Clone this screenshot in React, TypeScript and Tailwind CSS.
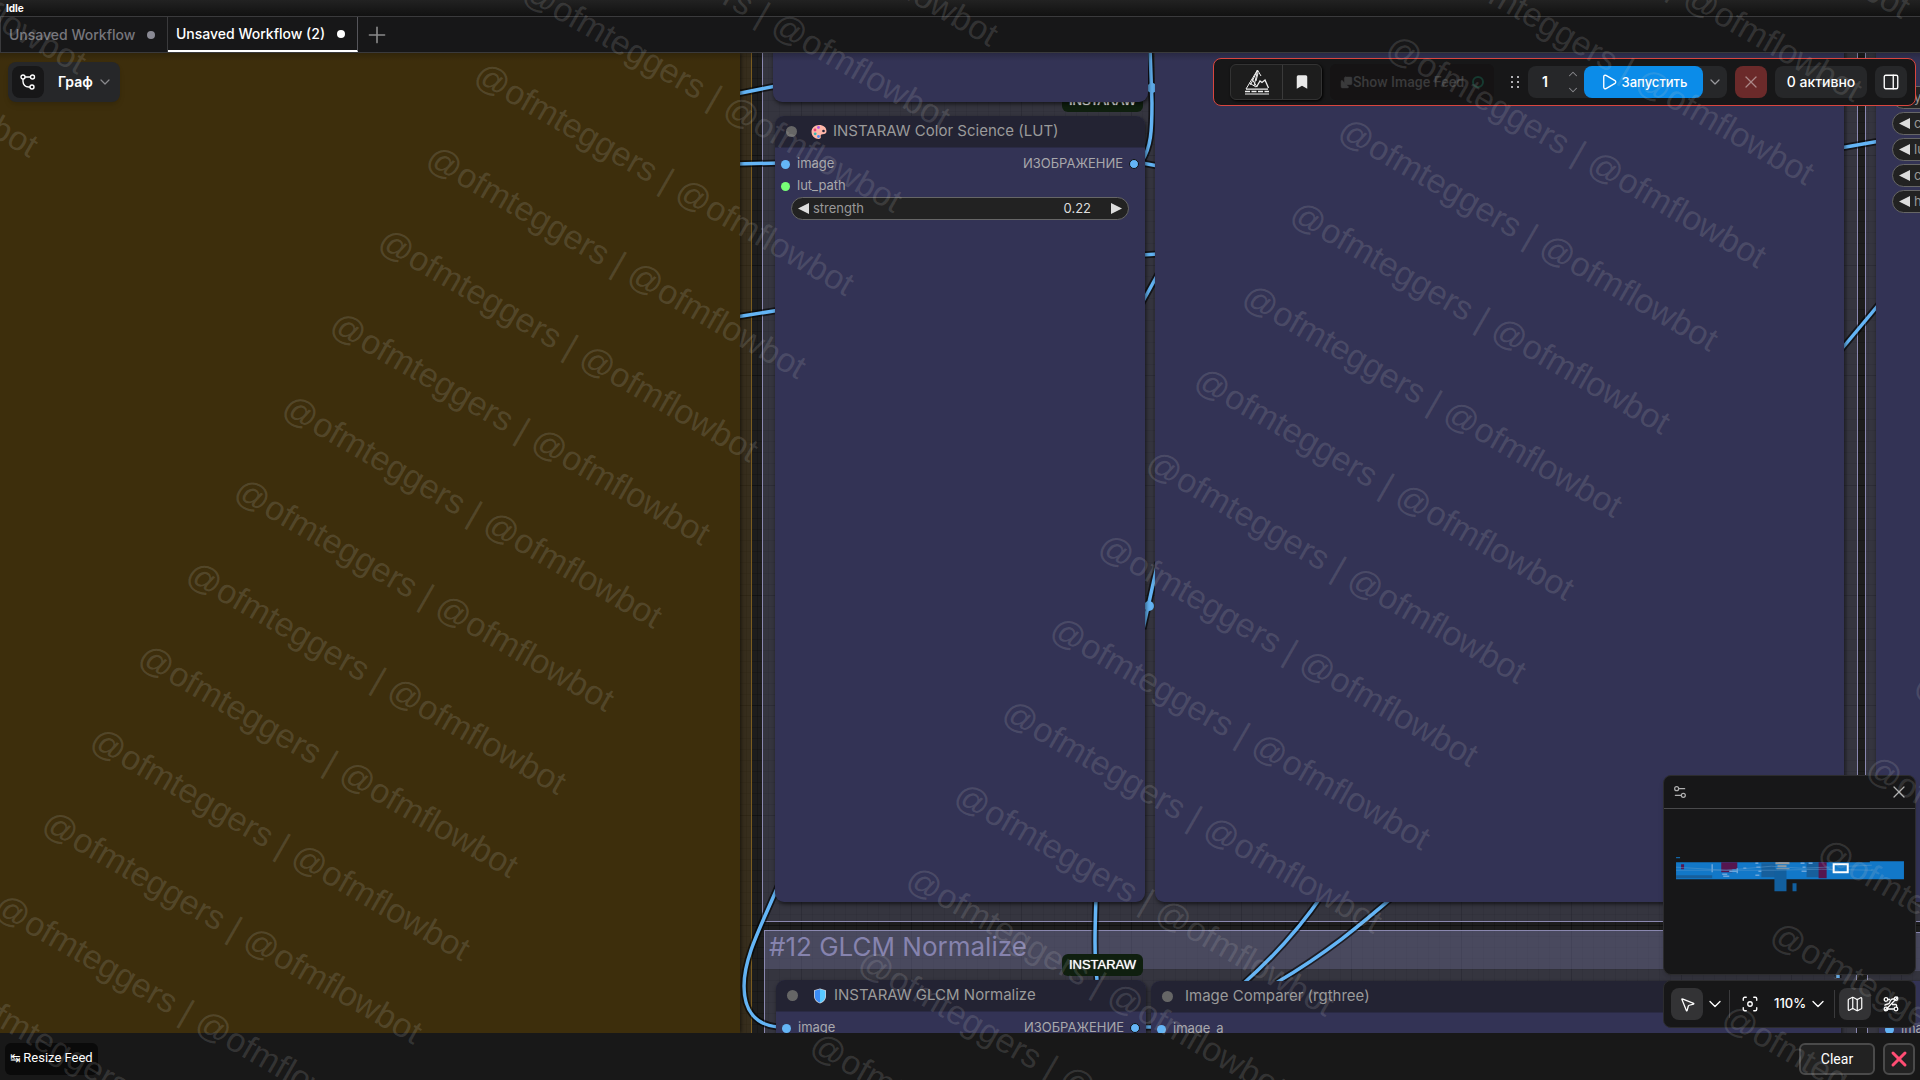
import {
	Bookmark,
	ChevronDown,
	ChevronUp,
	Focus,
	Images,
	Map as MapIcon,
	MousePointer2,
	PanelRight,
	Play,
	Plus,
	Settings2,
	X,
} from "lucide-react";
import type { ReactNode } from "react";

const WATERMARK = "@ofmteggers | @ofmflowbot";

function Watermark() {
	return (
		<div
			aria-hidden="true"
			className="pointer-events-none absolute inset-0 z-50 overflow-hidden"
		>
			<div className="absolute -top-[1024px] left-[214px] origin-top-left rotate-[30deg] font-['Liberation_Sans',sans-serif] text-[34px] text-[#c8c8c8]/17">
				{Array.from({ length: 21 }, (_, row) => (
					<div key={row} className="flex h-24 items-center">
						{Array.from({ length: 4 }, (_, col) => (
							<span key={col} className="w-[776px] shrink-0 whitespace-pre">
								{WATERMARK}
							</span>
						))}
					</div>
				))}
			</div>
		</div>
	);
}

function Tabs() {
	return (
		<nav className="flex h-[37px] shrink-0 border-y border-[#3a3a3c] bg-[#171718] text-sm font-medium">
			<button
				type="button"
				className="flex w-[168px] items-center justify-between border-x border-[#3a3a3c] pr-3 pl-2 text-[#76767c]"
			>
				Unsaved Workflow
				<span className="size-2 rounded-full bg-[#8a8a94]" />
			</button>
			<button
				type="button"
				className="flex w-[190px] items-center justify-between border-r border-b-2 border-r-[#55555a] border-b-white pr-3 pl-2 text-white"
			>
				Unsaved Workflow (2)
				<span className="size-2 rounded-full bg-white" />
			</button>
			<button type="button" aria-label="New tab" className="w-[38px] text-[#8a8a8a]">
				<Plus size={26} strokeWidth={1.5} className="mx-auto" />
			</button>
		</nav>
	);
}

/* Links between nodes, dark casing under a blue core */
const LINKS = [
	"M736 41 L776 33",
	"M736 111 L780 110",
	"M736 264 L780 257",
	"M779 831 C760 875 744 905 744 933 C744 958 756 972 778 974",
	"M1096 845 C1095 875 1094 900 1097 927",
	"M1150 -4 L1152 50 C1152 78 1151 94 1142 108",
	"M1142 110 L1158 113",
	"M1142 202 L1158 201",
	"M1142 250 L1158 221",
	"M1158 509 L1143 576",
	"M1323 841 C1302 872 1278 900 1244 930",
	"M1394 843 C1360 872 1330 898 1276 930",
	"M1840 95 L1880 88",
	"M1840 298 L1880 250",
	"M1142 974 L1160 974",
	"M1838 925 L1838 912",
];

function Links() {
	return (
		<svg className="absolute inset-0 h-full w-full" fill="none">
			{LINKS.map((d) => (
				<g key={d}>
					<path d={d} stroke="#000" strokeOpacity="0.6" strokeWidth="7" />
					<path d={d} stroke="#64b5f6" strokeWidth="3.5" />
				</g>
			))}
			<circle cx="1152" cy="35" r="5" fill="#64b5f6" />
			<circle cx="1149" cy="553" r="5" fill="#64b5f6" />
		</svg>
	);
}

function PaletteIcon() {
	return (
		<svg viewBox="0 0 16 16" className="size-4">
			<path
				d="M8 1C3.500 1 .5 4 .5 7.800.5 12 4 15 7.500 15c2 0 2.500-1 2.200-2.400-.3-1.500.4-2.300 1.800-2.300 2.600 0 4-1 4-3C15.500 3.400 12.500 1 8 1Z"
				fill="#ffb6a8"
			/>
			<circle cx="12.500" cy="7" r="1.300" fill="#25253a" />
			<circle cx="7.500" cy="3.500" r="1.400" fill="#b45ae0" />
			<circle cx="4" cy="6" r="1.400" fill="#f0407c" />
			<circle cx="4.200" cy="9.800" r="1.400" fill="#38b6b0" />
			<circle cx="7.500" cy="12.500" r="1.400" fill="#4a8cf0" />
		</svg>
	);
}

function ShieldIcon() {
	return (
		<svg viewBox="0 0 16 16" className="size-4">
			<path d="M8 .5 2 2.200V8c0 4 3 6.500 6 7.500 3-1 6-3.500 6-7.500V2.200Z" fill="#c9ced8" />
			<path d="M8 1.200 2.800 2.800V8c0 3.500 2.500 5.700 5.200 6.700Z" fill="#3b8cf5" />
			<path d="M8 1.200 13.200 2.800V8c0 3.500-2.500 5.700-5.200 6.700Z" fill="#58c8ff" />
		</svg>
	);
}

function GraphIcon() {
	return (
		<svg viewBox="0 0 16 16" className="size-4" fill="none" stroke="currentColor" strokeWidth="1.400">
			<circle cx="3" cy="3" r="2" />
			<circle cx="12.500" cy="3" r="2" />
			<circle cx="12" cy="13" r="2" />
			<path d="M5 3h5.500M3 5v2.500A5.500 5.500 0 0 0 8.500 13H10" />
		</svg>
	);
}

function LinksOffIcon() {
	return (
		<svg viewBox="0 0 16 16" className="size-4" fill="none" stroke="currentColor" strokeWidth="1.300">
			<circle cx="3" cy="3.500" r="1.800" />
			<circle cx="13" cy="2.800" r="1.800" />
			<circle cx="3" cy="13" r="1.800" />
			<circle cx="13" cy="13" r="1.800" />
			<path d="M5 3.500h2M11 3H9.500C7 3 7.500 6 6 7.500 5 8.500 2 8 1.500 9.500M5 13h6M9 8.500h3.500c1 0 1.500 1 1 2.500M1.500 15 15 1" />
		</svg>
	);
}

/* Wireframe mountain logo */
function ManagerLogo() {
	return (
		<svg viewBox="0 0 24 26" className="h-[26px] w-6" fill="none" stroke="#f0f0f0" strokeWidth="1">
			<path d="M1 20 12.500 1l3.500 6M12.500 1 5.500 16M12.500 2 9 17M4.500 14 11 18M7 10l5 8M13 4l-2 8" />
			<path d="m11.500 18 3.500-6 2 1.500 3-2.500 3.500 8M1 20.200h22" strokeWidth="1.300" />
			<path d="M0 22.500h24" strokeWidth="1.500" strokeDasharray="5 1.500" />
			<path d="M0 25h24" />
		</svg>
	);
}

type NodeProps = {
	className: string;
	title?: string;
	icon?: ReactNode;
	children?: ReactNode;
};

function GraphNode({ className, title, icon, children }: NodeProps) {
	return (
		<section
			className={`absolute overflow-hidden rounded-[9px] bg-[#333355] shadow-[1px_2px_4px_rgba(0,0,0,0.6)] ${className}`}
		>
			{title && (
				<header className="flex h-8 items-center border-b border-[#2a2a44] bg-[#232333] pl-[11px] text-[15px] text-[#9a9a9a]">
					<span className="size-[11px] rounded-full bg-[#666]" />
					{icon && <span className="ml-[14px]">{icon}</span>}
					<h2 className={icon ? "ml-[6px]" : "ml-3"}>{title}</h2>
				</header>
			)}
			{children}
		</section>
	);
}

function Slot({ name, output, green }: { name: string; output?: string; green?: boolean }) {
	return (
		<div className="flex h-[22px] items-center px-[6px] text-[13px] text-[#a8a8ac]">
			<span className={`size-[9px] rounded-full ${green ? "bg-[#7f7]" : "bg-[#64b5f6]"}`} />
			<span className="ml-[7px]">{name}</span>
			{output && (
				<>
					<span className="ml-auto">{output}</span>
					<span className="ml-[6px] size-[10px] rounded-full border border-[#111] bg-[#64b5f6]" />
				</>
			)}
		</div>
	);
}

function Stepper({ name, value }: { name: string; value?: string }) {
	return (
		<div className="mx-4 flex h-[23px] shrink-0 items-center rounded-full border border-[#666] bg-[#222] px-[6px] text-[13px] text-[#999]">
			<button type="button" aria-label={`Decrease ${name}`}>
				<svg viewBox="0 0 11 11" className="size-[11px]" fill="#ddd">
					<path d="M0 5.500 11 0v11Z" />
				</svg>
			</button>
			<label className="flex min-w-0 flex-1 items-center pl-1">
				{name}
				{value && (
					<input
						defaultValue={value}
						className="min-w-0 flex-1 bg-transparent pr-5 text-right text-[13px] text-[#ddd] outline-none"
					/>
				)}
			</label>
			<button type="button" aria-label={`Increase ${name}`}>
				<svg viewBox="0 0 11 11" className="size-[11px]" fill="#ddd">
					<path d="M11 5.500 0 0v11Z" />
				</svg>
			</button>
		</div>
	);
}

function Badge({ className }: { className: string }) {
	return (
		<span
			className={`absolute flex h-[22px] w-[81px] items-center justify-center rounded-md bg-[#0f1f0f] font-['Liberation_Sans'] text-[13px] text-white text-shadow-[0_0_1px_#fff] ${className}`}
		>
			INSTARAW
		</span>
	);
}

function Groups() {
	return (
		<>
			<div className="absolute top-0 left-0 h-full w-[752px] border-r border-[#7a5c20] bg-[#6b5020]/35" />
			<div className="absolute -top-2 left-[762px] h-[877px] w-[1096px] border border-[#8a88b0] bg-[#8080a8]/25" />
			<div className="absolute -top-2 left-[1865px] h-[877px] w-[600px] border border-[#8a88b0] bg-[#8080a8]/25" />
			<div className="absolute top-[877px] left-[764px] h-[300px] w-[1093px] border border-[#8a88b0] bg-[#8080a8]/25">
				<h2 className="h-[38px] bg-[#8888bb]/25 pl-1 text-[26px] leading-8 text-[#8683ae]">
					#12 GLCM Normalize
				</h2>
			</div>
			<div className="absolute top-[879px] left-[1867px] h-[300px] w-[600px] border border-[#8a88b0] bg-[#8080a8]/25">
				<div className="h-[38px] bg-[#8888bb]/25" />
			</div>
		</>
	);
}

function Toolbar() {
	return (
		<div className="absolute top-[5px] right-1 flex h-12 w-[703px] items-center rounded-lg border border-[#d9463f] bg-[#171718] pr-2 pl-4 text-sm font-medium text-white">
			<div className="flex h-9 overflow-hidden rounded-md border border-[#333] bg-[#1d1d1d] shadow-[1px_1px_3px_#000]">
				<button type="button" aria-label="Manager" className="w-[52px] border-r border-[#3a3a3a]">
					<span className="flex justify-center">
						<ManagerLogo />
					</span>
				</button>
				<button type="button" aria-label="Bookmarks" className="w-[38px]">
					<Bookmark size={18} fill="#e8e8e8" strokeWidth={0} className="mx-auto" />
				</button>
			</div>
			<button
				type="button"
				className="ml-2 flex h-9 w-[164px] items-center rounded-md bg-[#151314] pl-[10px] font-['Roboto'] text-sm text-[#3a3a3b]"
			>
				<Images size={13} fill="#3a3a3b" strokeWidth={1} />
				Show Image Feed
				<span className="ml-2 size-3 rounded-full border-2 border-[#163a30]" />
			</button>
			<svg viewBox="0 0 10 14" className="ml-4 h-[14px] w-[10px]" fill="#b0b0b4">
				<path d="M1 1h2v2H1zM7 1h2v2H7zM1 6h2v2H1zM7 6h2v2H7zM1 11h2v2H1zM7 11h2v2H7z" />
			</svg>
			<div className="ml-auto flex h-8 rounded-lg bg-[#262729]">
				<div className="flex w-14 items-center">
					<input
						aria-label="Batch count"
						defaultValue="1"
						className="w-[34px] bg-transparent text-center font-semibold outline-none"
					/>
					<span className="flex flex-1 flex-col items-center gap-[2px] text-[#8a8a8e]">
						<button type="button" aria-label="More">
							<ChevronUp size={14} strokeWidth={1.8} />
						</button>
						<button type="button" aria-label="Fewer">
							<ChevronDown size={14} strokeWidth={1.8} />
						</button>
					</span>
				</div>
				<button
					type="button"
					className="flex w-[119px] items-center justify-center gap-1 rounded-lg bg-[#0b8ce9] text-[13px]"
				>
					<Play size={18} strokeWidth={1.8} />
					Запустить
				</button>
				<button type="button" aria-label="Run options" className="w-6 text-[#9a9a9e]">
					<ChevronDown size={16} strokeWidth={1.8} className="mx-auto" />
				</button>
			</div>
			<button
				type="button"
				aria-label="Cancel"
				className="ml-2 size-8 rounded-lg bg-[#6b2a2a] text-[#a88]"
			>
				<X size={20} strokeWidth={1.5} className="mx-auto" />
			</button>
			<button type="button" className="ml-2 h-8 w-[92px] rounded-lg bg-[#262729]">
				0 активно
			</button>
			<button type="button" aria-label="Toggle panel" className="ml-2 size-8 rounded-lg bg-[#262729]">
				<PanelRight size={18} strokeWidth={1.8} className="mx-auto" />
			</button>
		</div>
	);
}

function Minimap() {
	return (
		<div className="h-[200px] rounded-lg border border-[#2c2c2e] bg-[#171718] shadow-md">
			<div className="flex h-[33px] items-center justify-between border-b border-[#4a4a4c] pr-[6px] pl-2 text-[#b0b0b0]">
				<button type="button" aria-label="Minimap settings">
					<Settings2 size={16} strokeWidth={1.8} />
				</button>
				<button type="button" aria-label="Close minimap">
					<X size={20} strokeWidth={1.5} />
				</button>
			</div>
			<svg viewBox="0 0 250 165" className="w-full">
				<path d="M12 48h4v1h-4z" fill="#1278c8" />
				<path d="M12 53h193v-1h34v18H12z" fill="#1278c8" />
				<path d="M12 66h36v3H12zM97 54h14v14H97zM142 53h13v15h-13z" fill="#175f9c" />
				<path d="M110 60h12v22h-12zM128 74h4v8h-4z" fill="#125f9e" />
				<path d="M57 53h16v7h-5v3H57zM154 53h8v16h-8zM17 55h3v5h-3z" fill="#56164f" />
				<path
					d="M48 55v8M58 65h5m2-3h8m-14 5h6m8-8v5m6-5h3M91 54h3m-2 4h4m-2 4h3m-6 4h4M136 54h4m-2 4h3m-4 4h5M144 54h4M114 54h10"
					stroke="#6aa5dc"
					strokeWidth="1.500"
				/>
				<path d="M111 53h14v2h-14zM113 56h9v2h-9zM112 59h13v1h-13z" fill="#9c9c9c" />
				<path d="m12 58 50 3 45-4 30 2 70-3M12 61h100l45-1 50 1" stroke="#5f9bcc" strokeWidth=".5" fill="none" />
				<rect x="169" y="55" width="14" height="8" fill="#1278c8" stroke="#fff" strokeWidth="2" />
			</svg>
		</div>
	);
}

function CanvasControls() {
	return (
		<div className="flex h-12 items-center rounded-lg border border-[#2c2c2e] bg-[#171718] pr-2 pl-[7px] text-white">
			<button type="button" aria-label="Select" className="size-8 rounded-lg bg-[#333335]">
				<MousePointer2 size={17} strokeWidth={1.8} className="mx-auto" />
			</button>
			<button type="button" aria-label="Select options" className="w-6">
				<ChevronDown size={20} strokeWidth={1.6} className="mx-auto" />
			</button>
			<span className="mx-[2px] h-7 w-px bg-[#3a3a3c]" />
			<button type="button" aria-label="Fit view" className="ml-[2px] size-8">
				<Focus size={18} strokeWidth={1.8} className="mx-auto" />
			</button>
			<button
				type="button"
				className="ml-2 flex items-center gap-[2px] text-[13px] font-medium"
			>
				110%
				<ChevronDown size={20} strokeWidth={1.6} />
			</button>
			<span className="mr-1 ml-auto h-7 w-px bg-[#3a3a3c]" />
			<button type="button" aria-label="Minimap" className="size-8 rounded-lg bg-[#333335]">
				<MapIcon size={18} strokeWidth={1.6} className="mx-auto" />
			</button>
			<button type="button" aria-label="Hide links" className="ml-1 flex size-8 items-center justify-center">
				<LinksOffIcon />
			</button>
		</div>
	);
}

function Canvas() {
	return (
		<main className="relative min-h-0 flex-1 overflow-hidden bg-[#1d1d1d]">
			{/* GRID */}
			<div className="absolute inset-0 bg-[linear-gradient(to_right,rgba(0,0,0,0.16)_1px,transparent_1px),linear-gradient(to_bottom,rgba(0,0,0,0.16)_1px,transparent_1px)] bg-size-[11px_11px] bg-position-[9px_3px]" />
			<div className="absolute inset-0 bg-[linear-gradient(to_right,rgba(0,0,0,0.25)_1px,transparent_1px),linear-gradient(to_bottom,rgba(0,0,0,0.25)_1px,transparent_1px)] bg-size-[110px_110px] bg-position-[31px_102px]" />

			<Groups />
			<Links />

			{/* NODES */}
			<div className="absolute top-0 left-0 h-full w-[740px] bg-[#3d2e0c] shadow-[1px_0_4px_rgba(0,0,0,0.6)]" />
			<Badge className="top-[37px] left-[1062px]" />
			<GraphNode className="-top-5 left-[773px] h-[69px] w-[375px]" />
			<GraphNode
				className="top-[63px] left-[775px] h-[786px] w-[370px]"
				title="INSTARAW Color Science (LUT)"
				icon={<PaletteIcon />}
			>
				<div className="pt-[5px]">
					<Slot name="image" output="ИЗОБРАЖЕНИЕ" />
					<Slot name="lut_path" green />
					<Stepper name="strength" value="0.22" />
				</div>
			</GraphNode>
			<GraphNode className="-top-5 left-[1155px] h-[869px] w-[689px]" />
			<GraphNode className="-top-5 left-[1876px] h-[869px] w-[370px]">
				<div className="flex flex-col gap-[3px] pt-[53px]">
					<Stepper name="y" />
					<Stepper name="c" />
					<Stepper name="lu" />
					<Stepper name="c" />
					<Stepper name="h" />
				</div>
			</GraphNode>
			<Badge className="top-[901px] left-[1062px]" />
			<GraphNode
				className="top-[927px] left-[776px] h-[200px] w-[370px]"
				title="INSTARAW GLCM Normalize"
				icon={<ShieldIcon />}
			>
				<div className="pt-[5px]">
					<Slot name="image" output="ИЗОБРАЖЕНИЕ" />
				</div>
			</GraphNode>
			<GraphNode
				className="top-[928px] left-[1151px] h-[200px] w-[690px]"
				title="Image Comparer (rgthree)"
			>
				<div className="pt-[5px]">
					<Slot name="image_a" />
				</div>
			</GraphNode>
			<GraphNode className="top-[928px] left-[1879px] h-[200px] w-[370px]">
				<div className="pt-[37px]">
					<Slot name="image" />
				</div>
			</GraphNode>

			{/* OVERLAYS */}
			<div className="absolute inset-x-0 top-0 h-2 bg-linear-to-b from-black/20 to-transparent" />
			<div className="absolute top-[9px] left-2 flex h-10 w-28 items-center rounded-lg bg-[#262729] px-1 text-white shadow-md">
				<span className="flex size-8 items-center justify-center rounded-lg bg-[#171718]">
					<GraphIcon />
				</span>
				<button type="button" className="ml-[14px] flex items-center gap-1 text-sm font-semibold">
					Граф
					<ChevronDown size={16} strokeWidth={1.8} className="text-[#8a8a8e]" />
				</button>
			</div>
			<Toolbar />
			<div className="absolute right-1 bottom-[5px] flex w-[253px] flex-col gap-[5px]">
				<Minimap />
				<CanvasControls />
			</div>
		</main>
	);
}

function FeedBar() {
	return (
		<footer className="flex h-[47px] shrink-0 items-center justify-between bg-[#181818] px-[5px] pt-1 font-['Roboto'] text-sm text-white">
			<button type="button" className="h-8 rounded-md bg-[#0a0a0a] px-[5px] text-[13px]">
				<span className="font-['DejaVu_Sans'] text-xs">↹</span> Resize Feed
			</button>
			<div className="flex gap-2">
				<button type="button" className="h-8 w-[76px] rounded-md border-2 border-[#4a4a4a] bg-[#222]">
					Clear
				</button>
				<button
					type="button"
					aria-label="Close feed"
					className="size-8 rounded-md border-2 border-[#4a4a4a] bg-[#222] text-[#ff4d73]"
				>
					<X size={24} strokeWidth={3} className="mx-auto" />
				</button>
			</div>
		</footer>
	);
}

export default function App() {
	return (
		<div className="relative flex h-screen flex-col overflow-hidden bg-[#171718] font-['Inter',sans-serif]">
			<div className="h-4 shrink-0 bg-linear-to-b from-[#222] to-[#111] pl-[6px] text-[10px] leading-4 font-bold text-white">
				Idle
			</div>
			<Tabs />
			<Canvas />
			<FeedBar />
			<Watermark />
		</div>
	);
}
